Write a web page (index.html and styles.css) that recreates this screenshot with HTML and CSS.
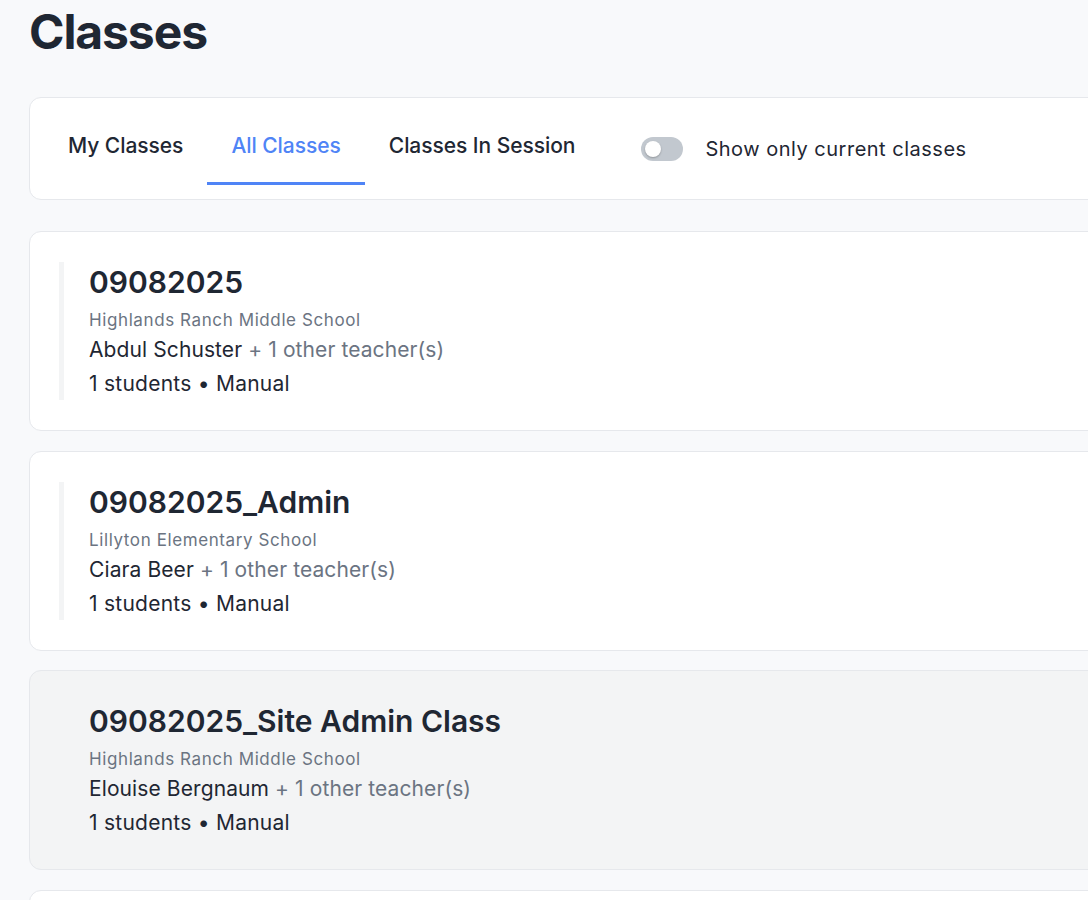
FILE: index.html
```html
<!DOCTYPE html>
<html lang="en">
<head>
<meta charset="utf-8">
<title>Classes</title>
<link rel="stylesheet" href="styles.css">
</head>
<body>
<main class="page">
  <h1 class="page-title">Classes</h1>

  <section class="tabs-card">
    <nav class="tabs">
      <a class="tab">My Classes</a>
      <a class="tab tab-active">All Classes</a>
      <a class="tab">Classes In Session</a>
    </nav>
    <label class="filter">
      <span class="switch"><span class="knob"></span></span>
      <span class="filter-label">Show only current classes</span>
    </label>
  </section>

  <section class="class-list">
    <article class="class-card">
      <div class="class-body">
        <h2 class="class-name">09082025</h2>
        <div class="school">Highlands Ranch Middle School</div>
        <div class="teacher">Abdul Schuster <span class="muted">+ 1 other teacher(s)</span></div>
        <div class="meta">1 students • Manual</div>
      </div>
    </article>

    <article class="class-card">
      <div class="class-body">
        <h2 class="class-name">09082025_Admin</h2>
        <div class="school">Lillyton Elementary School</div>
        <div class="teacher">Ciara Beer <span class="muted">+ 1 other teacher(s)</span></div>
        <div class="meta">1 students • Manual</div>
      </div>
    </article>

    <article class="class-card class-card-hover">
      <div class="class-body">
        <h2 class="class-name">09082025_Site Admin Class</h2>
        <div class="school">Highlands Ranch Middle School</div>
        <div class="teacher">Elouise Bergnaum <span class="muted">+ 1 other teacher(s)</span></div>
        <div class="meta">1 students • Manual</div>
      </div>
    </article>

    <article class="class-card class-card-empty"></article>
  </section>
</main>
</body>
</html>
```

FILE: styles.css
```css
html, body {
  margin: 0;
  padding: 0;
  overflow: hidden;
  background: #f8f9fb;
}

body {
  font-family: Inter, "Noto Sans", "Liberation Sans", sans-serif;
  color: #1f2733;
  height: 900px;
}

.page {
  padding: 8px 0 0 29px;
  width: 1300px;
}

.page-title {
  margin: 0;
  font-size: 48px;
  line-height: 48px;
  font-weight: 700;
  color: #1f2733;
  letter-spacing: -1.1px;
}

.tabs-card {
  margin-top: 41px;
  display: flex;
  align-items: center;
  background: #ffffff;
  border: 1px solid #e6e8ec;
  border-radius: 12px;
  padding: 12px 15px 14px 14px;
}

.tabs {
  display: flex;
}

.tab {
  display: block;
  padding: 22px 24px 22px;
  border-bottom: 3px solid transparent;
  font-size: 21px;
  line-height: 28px;
  font-weight: 500;
  letter-spacing: -0.05px;
  color: #1f2733;
}

.tab-active {
  color: #4f84f6;
  border-bottom-color: #4f84f6;
}

.filter {
  display: flex;
  align-items: center;
  margin-left: 42px;
  margin-top: 3px;
}

.switch {
  display: flex;
  align-items: center;
  width: 42px;
  height: 24px;
  border-radius: 12px;
  background: #c2c8cf;
  padding: 0 4px;
  box-sizing: border-box;
}

.knob {
  width: 16px;
  height: 16px;
  border-radius: 50%;
  background: #ffffff;
  box-shadow: 0 1px 2px rgba(0, 0, 0, 0.25);
}

.filter-label {
  margin-left: 22px;
  font-size: 20px;
  line-height: 28px;
  letter-spacing: 0.5px;
  color: #1f2733;
}

.class-list {
  margin-top: 31px;
  display: flex;
  flex-direction: column;
  gap: 19.5px;
}

.class-card {
  background: #ffffff;
  border: 1px solid #e6e8ec;
  border-radius: 12px;
  padding: 30px 30px 30px 29px;
}

.class-card-hover {
  background: #f3f4f5;
}

.class-card-empty {
  min-height: 138px;
}

.class-body {
  border-left: 5px solid #f3f4f5;
  padding-left: 25px;
}

.class-name {
  margin: 0;
  font-size: 30px;
  line-height: 40px;
  font-weight: 600;
  color: #1f2733;
}

.school {
  margin-top: 6px;
  font-size: 17px;
  line-height: 24px;
  letter-spacing: 0.6px;
  color: #6b7482;
}

.teacher {
  margin-top: 2px;
  font-size: 21px;
  line-height: 32px;
  letter-spacing: 0.1px;
  color: #1f2733;
}

.meta {
  margin-top: 2px;
  font-size: 21px;
  line-height: 32px;
  letter-spacing: 0.25px;
  color: #1f2733;
}

.muted {
  color: #6b7482;
}
```
